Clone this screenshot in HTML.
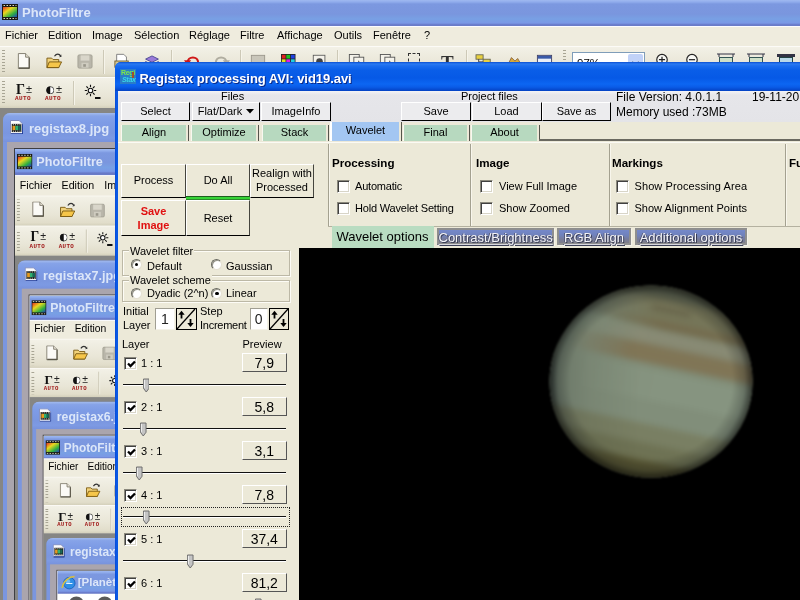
<!DOCTYPE html>
<html><head><meta charset="utf-8"><title>PhotoFiltre</title>
<style>
*{box-sizing:border-box;margin:0;padding:0}
html,body{width:800px;height:600px;overflow:hidden;background:#808080}
body{font-family:"Liberation Sans",sans-serif;font-size:11px;color:#000}
#root{position:absolute;left:0;top:0;width:800px;height:600px;overflow:hidden;will-change:transform}
.ic{position:absolute;display:block}
/* ---------- PhotoFiltre window ---------- */
.pf{position:absolute;left:0;top:0;width:800px;height:600px;overflow:hidden;background:#ece9d8}
.pftitle{position:absolute;left:0;top:0;width:800px;height:25.500px;background:linear-gradient(#9fb9f0 0,#90acec 2px,#7c98e0 4px,#7a96de 14px,#78a0e4 19px,#7a98e6 23px,#6676c6 25px,#6a7cc8 25.500px)}
.pftxt{position:absolute;top:4px;font-weight:bold;font-size:13px;line-height:17px;color:#dbe6f9;white-space:nowrap}
.menubar{position:absolute;left:0;top:25.500px;width:800px;height:20.500px;background:#efecde;border-top:1px solid #fbfbff}
.menubar span{position:absolute;top:1.500px;font-size:11px;line-height:14px;white-space:nowrap}
.tb{position:absolute;left:0;width:800px;height:31px;background:linear-gradient(#f3f1e7 0,#efede1 6px,#e9e6d7 18px,#e1ddca 27px,#d6d2bd 29.500px,#b5b19c 30.500px,#b5b19c 31px);border-top:1px solid #fcfbf7}
.grip{position:absolute;width:3px;background:repeating-linear-gradient(#a8a594 0,#a8a594 1px,transparent 1px,transparent 3px)}
.sep{position:absolute;width:2px;border-left:1px solid #cdc9b7;border-right:1px solid #f6f4ea}
.auto{position:absolute;left:0;top:15px;font:bold 6px/7px "Liberation Mono",monospace;color:#a01818;letter-spacing:.4px}
.mdi{position:absolute;left:0;top:108px;width:800px;height:640px;background:#868684}
.child{position:absolute;left:2.700px;top:4.700px;width:760px;height:640px;background:#7a96df;border-radius:7px 7px 0 0;overflow:hidden}
.ctitle{position:absolute;left:0;top:0;width:100%;height:29px;background:linear-gradient(#a3bbee 0,#86a3e8 3px,#7e9ce6 9px,#7a96df 20px,#7d9ae3 25px,#7892dc 29px)}
.ctxt{position:absolute;left:26.300px;top:7px;font-weight:bold;font-size:13px;line-height:17px;color:#dbe6f9;white-space:nowrap}
.cclient{position:absolute;left:4.100px;top:29px;width:752px;height:640px;background:#aaa5ad}
.nest{position:absolute;left:8.200px;top:7px;width:800px;height:600px;transform:scale(.97);transform-origin:0 0;outline:1px solid #3c3c40}
/* ---------- Registax window ---------- */
#rx{position:absolute;left:0;top:0;width:800px;height:600px;overflow:hidden}
.rxframe{position:absolute;left:115px;top:62px;width:700px;height:560px;background:linear-gradient(90deg,#0846d0 0,#0a58e4 1px,#0a58e4 100%);border-radius:6px 0 0 0}
.rxtitle{position:absolute;left:115px;top:62px;width:700px;height:29px;border-radius:6px 0 0 0;background:linear-gradient(#0a4fd2 0,#2a7af2 2px,#1a6cee 4px,#0a5ee8 8px,#0659e6 16px,#0c66f2 22px,#0a5ce8 25px,#0548cc 28px,#0443c4 29px)}
.rxicon{position:absolute;left:120px;top:69px;width:16px;height:14.500px;background:#2a7cc8;overflow:hidden}
.rxicon span{position:absolute;font:bold 7px/8px "Liberation Sans",sans-serif;letter-spacing:-.3px}
.rxicon i{position:absolute;left:12px;top:3px;width:2px;height:6px;background:#a05028}
.rxttxt{position:absolute;left:139.500px;top:69.500px;letter-spacing:-.05px;font-weight:bold;font-size:13px;line-height:17px;color:#fff;white-space:nowrap;text-shadow:1px 1px 0 #0a2a8a}
.rxclient{position:absolute;left:0;top:0;width:800px;height:600px;clip-path:polygon(118px 91px,800px 91px,800px 600px,118px 600px);background:#ece9d8}
.toppanel{position:absolute;left:118px;top:90.500px;width:700px;height:31px;background:linear-gradient(#f4f4f6 0,#e6e6ea 4px,#e4e4e8 100%)}
.l{position:absolute;font-size:11px;line-height:13px;white-space:nowrap}
.l.f12{font-size:12px;line-height:14px}
.l.hd{font-weight:bold;font-size:11.600px;line-height:13px}
.l.gbl{background:#ece9d8;padding:0 1px;margin-left:-1px}
.l.il{line-height:14px}
.b{position:absolute;background:#ece9d8;border-top:1px solid #fff;border-left:1px solid #fff;border-right:1.500px solid #000;border-bottom:1.500px solid #000;display:flex;align-items:center;justify-content:center;text-align:center;font-size:11px;line-height:14px}
.b.tb{background:#ececee}
.b.ab{border-right:1px solid #45453e}
.b span{display:block}
.tab{position:absolute;top:125px;height:15.500px;background:#b7d9bf;text-align:center;font-size:11px;line-height:15px;box-shadow:-1px 0 0 #f8f8f0,2px 0 0 #ece9d8,3px 0 0 #55554c}
.tab.act{top:122px;height:18.500px;background:#a3c6f2;line-height:16px;box-shadow:-2px 0 0 #fff,2px 0 0 #ece9d8,3px 0 0 #55554c}
.tabline{position:absolute;left:118px;top:141.500px;width:700px;height:1px;background:#fbfaf4}
.vdiv{position:absolute;top:144px;width:2px;height:82px;border-left:1px solid #a4a190;border-right:1px solid #f8f6ec}
.hdiv{position:absolute;left:328px;top:225.500px;width:480px;height:1px;background:#b4b1a0}
.cb{position:absolute;width:13px;height:13px;background:#fff;border:1px solid #8a887c;border-right-color:#fff;border-bottom-color:#fff;box-shadow:inset 1px 1px 0 #404040,inset -1px -1px 0 #d8d5c8}
.st0{position:absolute;background:#b9dcc1;font-size:13px;line-height:22px;text-align:center}
.st{position:absolute;top:228px;height:17px;border:2px solid #8e8e8e;background:linear-gradient(#7488ca 0,#7082bc 40%,#767b9c 70%,#7e7e88 100%);font-size:13px;line-height:16px;text-align:center;color:#f4f4f8;white-space:nowrap;text-shadow:1px 1px 0 #3a3e55,-1px 0 0 #565a78;box-shadow:1px 1px 0 #f4f2e8}
.st span{text-decoration:underline;text-decoration-thickness:1px;text-underline-offset:1.500px;text-decoration-color:#d8d8e0;position:relative;top:-.5px}
.blk{position:absolute;left:298.500px;top:247.500px;width:520px;height:360px;background:#000}
.gb{position:absolute;border:1px solid #d4d0c0;box-shadow:inset 1px 1px 0 #fdfcf6,1px 1px 0 #fdfcf6;border-color:#bcb8a6}
.rd{position:absolute;width:11px;height:11px;border-radius:50%;background:#fff;border:1px solid #6a6a60;border-right-color:#e4e0d2;border-bottom-color:#e4e0d2;box-shadow:inset 1px 1px 0 #9a988c}
.rd i{position:absolute;left:3px;top:3px;width:3.500px;height:3.500px;border-radius:50%;background:#000}
.sv{position:absolute;height:22px;background:#fff;border:1px solid #a09e92;border-right-color:#f4f2e8;border-bottom-color:#f4f2e8;color:#222;font-size:14px;line-height:20px;text-align:center}
.sb{position:absolute;width:20.500px;height:22px;background:#ece9d8;border:1px solid #000}
.sb svg{position:absolute;left:-1px;top:-1px}
.pv{position:absolute;width:45.500px;height:18.500px;background:#ece9d8;border-top:1px solid #fff;border-left:1px solid #fff;border-right:1.500px solid #555;border-bottom:1.500px solid #555;font-size:14px;line-height:19px;text-align:center}
.sl{position:absolute;width:163px;height:3.500px;background:#111;border-bottom:1px solid #fff;height:2.600px}
.th{position:absolute;width:7px;height:14px}
.focus{position:absolute;border:1px dotted #222}
/* Jupiter */
.jup{position:absolute;left:550px;top:285px;width:201px;height:194px;border-radius:50%;overflow:hidden;background:#b9bfae;filter:blur(1.200px)}
.jup div{position:absolute;left:-20px;width:250px}
.jshade{left:0!important;top:0;width:201px!important;height:194px;border-radius:50%;background:radial-gradient(ellipse at 45% 48%,rgba(0,0,0,0) 55%,rgba(10,14,8,.35) 85%,rgba(0,0,0,.8) 100%)}

.shift,.tshift{position:absolute;left:0;top:0;width:800px;height:600px}
.pf.n>.tshift{top:1px}
.pf.n>.pftitle{height:28px}

</style></head>
<body>
<div id="root">
<div class="pf"><div class="pftitle"></div><div class="tshift"><svg class="ic" style="left:2px;top:4px" width="16" height="16" viewBox="0 0 16 16"><defs><linearGradient id="rg" x1="0" y1="0" x2="1" y2="1"><stop offset="0" stop-color="#e83020"/><stop offset=".35" stop-color="#e8d820"/><stop offset=".7" stop-color="#30b040"/><stop offset="1" stop-color="#2040c0"/></linearGradient></defs><rect width="16" height="16" fill="#1a1a14"/><rect x="1" y="3" width="14" height="10" fill="url(#rg)"/><path d="M1.500 1.500h13M1.500 14.500h13" stroke="#d8d8c0" stroke-width="1" stroke-dasharray="1.500 1.500"/></svg><div class="pftxt" style="left:22px">PhotoFiltre</div></div><div class="shift" style="top:0px"><div class="menubar"><span style="left:5px">Fichier</span><span style="left:48px">Edition</span><span style="left:92px">Image</span><span style="left:134px">Sélection</span><span style="left:189px">Réglage</span><span style="left:240px">Filtre</span><span style="left:277px">Affichage</span><span style="left:334px">Outils</span><span style="left:373px">Fenêtre</span><span style="left:424px">?</span></div><div class="tb" style="top:46px"></div><div class="tb" style="top:77px"></div><div class="grip" style="left:2px;top:50px;height:24px"></div><svg class="ic" style="left:17px;top:52.500px" width="14.500" height="16.500" viewBox="0 0 16 18"><path d="M1.5 .5h8l4 4v12.5h-12z" fill="#fbfaf6" stroke="#7d786a"/><path d="M9.5 .5v4h4" fill="#e6e2d4" stroke="#7d786a"/><path d="M2 16.5h11.500" stroke="#5a5648" stroke-width="1.6"/><path d="M13.5 5v12" stroke="#5a5648" stroke-width="1.3"/></svg><svg class="ic" style="left:45.500px;top:52px" width="17" height="17" viewBox="0 0 18 18"><path d="M1 6.500h5l1.500 1.500h6v8.500h-12.500z" fill="#f1d27a" stroke="#7a5a12"/><path d="M3.500 10.500h13l-3 6h-12.500z" fill="#f6c64a" stroke="#7a5a12"/><path d="M9 4.500c2-3 5-3 6.500 0" fill="none" stroke="#333" stroke-width="1.300"/><path d="M14 5.500l2.500-.5-.500-2.500z" fill="#333"/></svg><svg class="ic" style="left:77px;top:54px" width="16" height="15" viewBox="0 0 18 17"><rect x="1" y="1" width="16" height="15" rx="1.500" fill="#b9b6aa" stroke="#a29f92"/><rect x="4" y="1.500" width="10" height="6" fill="#d9d6ca"/><rect x="5" y="10" width="8" height="5.500" fill="#cfccc0"/><rect x="7" y="11.500" width="3" height="3" fill="#9a978b"/></svg><div class="sep" style="left:103px;top:50px;height:24px"></div><svg class="ic" style="left:114px;top:53px" width="16" height="16" viewBox="0 0 18 18"><path d="M3 1.500h8l3 3v9h-11z" fill="#fff" stroke="#777"/><rect x="1" y="9" width="15" height="7" fill="#d8c890" stroke="#6a5a2a"/></svg><svg class="ic" style="left:144px;top:53.500px" width="16" height="15" viewBox="0 0 20 18"><path d="M2 6l8-4 8 4-8 4z" fill="#9a7ad8" stroke="#3a3a8a"/><path d="M2 9l8 4 8-4v4l-8 4-8-4z" fill="#c8c8e8" stroke="#3a3a8a"/></svg><div class="sep" style="left:171px;top:50px;height:24px"></div><svg class="ic" style="left:183.500px;top:54px" width="16" height="16" viewBox="0 0 18 18"><path d="M4 10c0-8 12-8 12 0" fill="none" stroke="#d01818" stroke-width="2.400"/><path d="M0 7l8 0-4 6z" fill="#d01818"/></svg><svg class="ic" style="left:214px;top:54px" width="16" height="16" viewBox="0 0 18 18"><path d="M2 10c0-8 12-8 12 0" fill="none" stroke="#b0ada0" stroke-width="2.400"/><path d="M18 7l-8 0 4 6z" fill="#b0ada0"/></svg><div class="sep" style="left:239.500px;top:50px;height:24px"></div><svg class="ic" style="left:249.500px;top:53.500px" width="16" height="16" viewBox="0 0 18 18"><rect x="1.500" y="1.500" width="15" height="15" fill="#c9c6ba" stroke="#9a978b"/></svg><svg class="ic" style="left:281px;top:54px" width="14.500" height="14.500" viewBox="0 0 18 18"><rect x="0" y="0" width="18" height="18" fill="#222"/><rect x="1" y="1" width="4.700" height="4.700" fill="#e02020"/><rect x="6.600" y="1" width="4.700" height="4.700" fill="#20c020"/><rect x="12.300" y="1" width="4.700" height="4.700" fill="#2040e0"/><rect x="1" y="6.600" width="4.700" height="4.700" fill="#e0e020"/><rect x="6.600" y="6.600" width="4.700" height="4.700" fill="#e020e0"/><rect x="12.300" y="6.600" width="4.700" height="4.700" fill="#20d0e0"/><rect x="1" y="12.300" width="4.700" height="4.700" fill="#ff8020"/><rect x="6.600" y="12.300" width="4.700" height="4.700" fill="#8040c0"/><rect x="12.300" y="12.300" width="4.700" height="4.700" fill="#40a080"/></svg><svg class="ic" style="left:312px;top:53.500px" width="15" height="15" viewBox="0 0 18 18"><rect x="1.500" y="1.500" width="14" height="15" fill="#f4f2ea" stroke="#555"/><circle cx="9" cy="9" r="4" fill="#444"/></svg><div class="sep" style="left:337px;top:50px;height:24px"></div><svg class="ic"  style="left:348px;top:52.500px" width="18" height="16.500" viewBox="0 0 20 18"><rect x="1.500" y="1.500" width="11" height="13" fill="#f4f2ea" stroke="#555"/><rect x="6.500" y="4.500" width="11" height="13" fill="#f4f2ea" stroke="#555"/><path d="M9 16l3-8 3 8z" fill="#333"/></svg><svg class="ic"  style="left:379px;top:52.500px" width="18" height="16.500" viewBox="0 0 20 18"><rect x="1.500" y="1.500" width="11" height="13" fill="#f4f2ea" stroke="#555"/><rect x="6.500" y="4.500" width="11" height="13" fill="#f4f2ea" stroke="#555"/><path d="M9 16l3-8 3 8z" fill="#333"/></svg><div style="position:absolute;left:408px;top:53px;width:12px;height:14px;border:1px dashed #333"></div><div style="position:absolute;left:441px;top:52.500px;width:16px;font:bold 19px/20px 'Liberation Serif',serif;color:#333">T</div><div class="sep" style="left:466px;top:50px;height:24px"></div><svg class="ic" style="left:475px;top:53px" width="18" height="16" viewBox="0 0 20 18"><rect x="1" y="2" width="8" height="5" fill="#e8d040" stroke="#665"/><rect x="9" y="7" width="8" height="5" fill="#e8d040" stroke="#665"/><path d="M4 7v3h5" fill="none" stroke="#333"/></svg><svg class="ic" style="left:506px;top:53.500px" width="18" height="16" viewBox="0 0 20 18"><path d="M2 12l4-8 4 4 3-3 4 7z" fill="#d8a838" stroke="#864"/></svg><svg class="ic" style="left:535.500px;top:53px" width="17" height="17" viewBox="0 0 18 18"><rect x="1.500" y="2.500" width="15" height="12" fill="#e8eef8" stroke="#446"/><rect x="2" y="3" width="14" height="3" fill="#3a5aa8"/></svg><div class="grip" style="left:563px;top:50px;height:24px"></div><div style="position:absolute;left:572px;top:51.500px;width:72.500px;height:21px;border:1px solid #7f9db9;background:#fff"><span style="position:absolute;left:4px;top:4.500px;font-size:11.500px">97%</span><div style="position:absolute;right:1px;top:1px;width:15px;height:19px;background:#c1d2f8;border-radius:2px"><svg width="15" height="19" viewBox="0 0 15 19"><path d="M4 8l3.500 3.500L11 8" fill="none" stroke="#4d6185" stroke-width="2"/></svg></div></div><svg class="ic" style="left:655px;top:53px" width="14" height="16" viewBox="0 0 16 18"><circle cx="8" cy="7.500" r="6" fill="#f8f8f4" stroke="#222" stroke-width="1.300"/><path d="M4.500 7.500h7M8 4v7" stroke="#222" stroke-width="1.400"/></svg><svg class="ic" style="left:684.500px;top:53px" width="14" height="16" viewBox="0 0 16 18"><circle cx="8" cy="7.500" r="6" fill="#f8f8f4" stroke="#222" stroke-width="1.300"/><path d="M4.500 7.500h7" stroke="#222" stroke-width="1.400"/></svg><svg class="ic" style="left:716px;top:53px" width="20" height="16" viewBox="0 0 20 16"><path d="M1 1h18" stroke="#334"/><path d="M3 1v3M17 1v3" stroke="#334"/><rect x="3.500" y="4.500" width="13" height="11" fill="#cfe0c8" stroke="#355"/><path d="M4 15l3-6 3 4 2-3 4 5z" fill="#3a8a4a"/></svg><svg class="ic" style="left:746px;top:53px" width="20" height="16" viewBox="0 0 20 16"><path d="M1 1h18" stroke="#334"/><path d="M3 1v3M17 1v3" stroke="#334"/><rect x="3.500" y="4.500" width="13" height="11" fill="#cfe0c8" stroke="#355"/><path d="M4 15l3-6 3 4 2-3 4 5z" fill="#3a8a4a"/></svg><svg class="ic" style="left:776px;top:53px" width="20" height="16" viewBox="0 0 20 16"><rect x="1" y="1" width="18" height="3" fill="#334"/><rect x="3.500" y="4.500" width="13" height="11" fill="#b8d8e8" stroke="#244"/></svg><div class="grip" style="left:2px;top:81px;height:24px"></div><div style="position:absolute;left:15px;top:80px;width:20px;height:24px"><span style="position:absolute;left:1px;top:1.500px;font:bold 14px/15px 'Liberation Serif',serif;color:#111">Γ</span><span style="position:absolute;left:11px;top:2.500px;font:11px/12px 'Liberation Sans',sans-serif;color:#222">±</span><span class="auto">AUTO</span></div><div style="position:absolute;left:45px;top:80px;width:20px;height:24px"><svg style="position:absolute;left:.5px;top:5.500px" width="8.500" height="8.500" viewBox="0 0 10 10"><circle cx="5" cy="5" r="4.300" fill="#fff" stroke="#111" stroke-width=".8"/><path d="M5 .5a4.500 4.500 0 0 0 0 9z" fill="#111"/></svg><span style="position:absolute;left:11px;top:2.500px;font:11px/12px 'Liberation Sans',sans-serif;color:#222">±</span><span class="auto">AUTO</span></div><div class="sep" style="left:73px;top:81px;height:24px"></div><svg class="ic" style="left:83.500px;top:83.500px" width="18" height="16" viewBox="0 0 18 16"><circle cx="6.500" cy="6.500" r="2.300" fill="#fff" stroke="#111" stroke-width="1.100"/><path d="M6.500 .8v2.200M6.500 10v2.200M.8 6.500h2.200M10 6.500h2.200M2.400 2.400l1.600 1.600M9 9l1.600 1.600M10.600 2.400L9 4M4 9l-1.600 1.600" stroke="#111" stroke-width="1.100"/><path d="M11 14h5.500" stroke="#111" stroke-width="2"/></svg><div class="mdi"><div class="child"><div class="ctitle"></div><svg class="ic" style="left:7px;top:7px" width="13.500" height="14.500" viewBox="0 0 14 15"><path d="M.5 .5h9l3.500 3.500v10.500h-12.500z" fill="#fdfdfd" stroke="#7c86b8"/><path d="M13.200 4.500v10M1 14.300h12.500" stroke="#1c3a9a" stroke-width="1.200"/><rect x="1.800" y="4" width="10" height="8.500" fill="#1c1c18"/><rect x="2.600" y="6" width="3" height="4.500" fill="#e89a20"/><rect x="5.600" y="6" width="3" height="4.500" fill="#30b070"/><rect x="8.600" y="6" width="2.400" height="4.500" fill="#186858"/><path d="M3 4.900h8M3 11.600h8" stroke="#f4f4e8" stroke-width="1" stroke-dasharray="1 1.300"/></svg><div class="ctxt">registax8.jpg</div><div class="cclient"><div class="nest"><div class="pf n"><div class="pftitle"></div><div class="tshift"><svg class="ic" style="left:2px;top:4px" width="16" height="16" viewBox="0 0 16 16"><defs><linearGradient id="rg" x1="0" y1="0" x2="1" y2="1"><stop offset="0" stop-color="#e83020"/><stop offset=".35" stop-color="#e8d820"/><stop offset=".7" stop-color="#30b040"/><stop offset="1" stop-color="#2040c0"/></linearGradient></defs><rect width="16" height="16" fill="#1a1a14"/><rect x="1" y="3" width="14" height="10" fill="url(#rg)"/><path d="M1.500 1.500h13M1.500 14.500h13" stroke="#d8d8c0" stroke-width="1" stroke-dasharray="1.500 1.500"/></svg><div class="pftxt" style="left:22px">PhotoFiltre</div></div><div class="shift" style="top:1.9px"><div class="menubar"><span style="left:5px">Fichier</span><span style="left:48px">Edition</span><span style="left:92px">Image</span><span style="left:134px">Sélection</span><span style="left:189px">Réglage</span><span style="left:240px">Filtre</span><span style="left:277px">Affichage</span><span style="left:334px">Outils</span><span style="left:373px">Fenêtre</span><span style="left:424px">?</span></div><div class="tb" style="top:46px"></div><div class="tb" style="top:77px"></div><div class="grip" style="left:2px;top:50px;height:24px"></div><svg class="ic" style="left:17px;top:52.500px" width="14.500" height="16.500" viewBox="0 0 16 18"><path d="M1.5 .5h8l4 4v12.5h-12z" fill="#fbfaf6" stroke="#7d786a"/><path d="M9.5 .5v4h4" fill="#e6e2d4" stroke="#7d786a"/><path d="M2 16.5h11.500" stroke="#5a5648" stroke-width="1.6"/><path d="M13.5 5v12" stroke="#5a5648" stroke-width="1.3"/></svg><svg class="ic" style="left:45.500px;top:52px" width="17" height="17" viewBox="0 0 18 18"><path d="M1 6.500h5l1.500 1.500h6v8.500h-12.500z" fill="#f1d27a" stroke="#7a5a12"/><path d="M3.500 10.500h13l-3 6h-12.500z" fill="#f6c64a" stroke="#7a5a12"/><path d="M9 4.500c2-3 5-3 6.500 0" fill="none" stroke="#333" stroke-width="1.300"/><path d="M14 5.500l2.500-.5-.500-2.500z" fill="#333"/></svg><svg class="ic" style="left:77px;top:54px" width="16" height="15" viewBox="0 0 18 17"><rect x="1" y="1" width="16" height="15" rx="1.500" fill="#b9b6aa" stroke="#a29f92"/><rect x="4" y="1.500" width="10" height="6" fill="#d9d6ca"/><rect x="5" y="10" width="8" height="5.500" fill="#cfccc0"/><rect x="7" y="11.500" width="3" height="3" fill="#9a978b"/></svg><div class="sep" style="left:103px;top:50px;height:24px"></div><svg class="ic" style="left:114px;top:53px" width="16" height="16" viewBox="0 0 18 18"><path d="M3 1.500h8l3 3v9h-11z" fill="#fff" stroke="#777"/><rect x="1" y="9" width="15" height="7" fill="#d8c890" stroke="#6a5a2a"/></svg><svg class="ic" style="left:144px;top:53.500px" width="16" height="15" viewBox="0 0 20 18"><path d="M2 6l8-4 8 4-8 4z" fill="#9a7ad8" stroke="#3a3a8a"/><path d="M2 9l8 4 8-4v4l-8 4-8-4z" fill="#c8c8e8" stroke="#3a3a8a"/></svg><div class="sep" style="left:171px;top:50px;height:24px"></div><svg class="ic" style="left:183.500px;top:54px" width="16" height="16" viewBox="0 0 18 18"><path d="M4 10c0-8 12-8 12 0" fill="none" stroke="#d01818" stroke-width="2.400"/><path d="M0 7l8 0-4 6z" fill="#d01818"/></svg><svg class="ic" style="left:214px;top:54px" width="16" height="16" viewBox="0 0 18 18"><path d="M2 10c0-8 12-8 12 0" fill="none" stroke="#b0ada0" stroke-width="2.400"/><path d="M18 7l-8 0 4 6z" fill="#b0ada0"/></svg><div class="sep" style="left:239.500px;top:50px;height:24px"></div><svg class="ic" style="left:249.500px;top:53.500px" width="16" height="16" viewBox="0 0 18 18"><rect x="1.500" y="1.500" width="15" height="15" fill="#c9c6ba" stroke="#9a978b"/></svg><svg class="ic" style="left:281px;top:54px" width="14.500" height="14.500" viewBox="0 0 18 18"><rect x="0" y="0" width="18" height="18" fill="#222"/><rect x="1" y="1" width="4.700" height="4.700" fill="#e02020"/><rect x="6.600" y="1" width="4.700" height="4.700" fill="#20c020"/><rect x="12.300" y="1" width="4.700" height="4.700" fill="#2040e0"/><rect x="1" y="6.600" width="4.700" height="4.700" fill="#e0e020"/><rect x="6.600" y="6.600" width="4.700" height="4.700" fill="#e020e0"/><rect x="12.300" y="6.600" width="4.700" height="4.700" fill="#20d0e0"/><rect x="1" y="12.300" width="4.700" height="4.700" fill="#ff8020"/><rect x="6.600" y="12.300" width="4.700" height="4.700" fill="#8040c0"/><rect x="12.300" y="12.300" width="4.700" height="4.700" fill="#40a080"/></svg><svg class="ic" style="left:312px;top:53.500px" width="15" height="15" viewBox="0 0 18 18"><rect x="1.500" y="1.500" width="14" height="15" fill="#f4f2ea" stroke="#555"/><circle cx="9" cy="9" r="4" fill="#444"/></svg><div class="sep" style="left:337px;top:50px;height:24px"></div><svg class="ic"  style="left:348px;top:52.500px" width="18" height="16.500" viewBox="0 0 20 18"><rect x="1.500" y="1.500" width="11" height="13" fill="#f4f2ea" stroke="#555"/><rect x="6.500" y="4.500" width="11" height="13" fill="#f4f2ea" stroke="#555"/><path d="M9 16l3-8 3 8z" fill="#333"/></svg><svg class="ic"  style="left:379px;top:52.500px" width="18" height="16.500" viewBox="0 0 20 18"><rect x="1.500" y="1.500" width="11" height="13" fill="#f4f2ea" stroke="#555"/><rect x="6.500" y="4.500" width="11" height="13" fill="#f4f2ea" stroke="#555"/><path d="M9 16l3-8 3 8z" fill="#333"/></svg><div style="position:absolute;left:408px;top:53px;width:12px;height:14px;border:1px dashed #333"></div><div style="position:absolute;left:441px;top:52.500px;width:16px;font:bold 19px/20px 'Liberation Serif',serif;color:#333">T</div><div class="sep" style="left:466px;top:50px;height:24px"></div><svg class="ic" style="left:475px;top:53px" width="18" height="16" viewBox="0 0 20 18"><rect x="1" y="2" width="8" height="5" fill="#e8d040" stroke="#665"/><rect x="9" y="7" width="8" height="5" fill="#e8d040" stroke="#665"/><path d="M4 7v3h5" fill="none" stroke="#333"/></svg><svg class="ic" style="left:506px;top:53.500px" width="18" height="16" viewBox="0 0 20 18"><path d="M2 12l4-8 4 4 3-3 4 7z" fill="#d8a838" stroke="#864"/></svg><svg class="ic" style="left:535.500px;top:53px" width="17" height="17" viewBox="0 0 18 18"><rect x="1.500" y="2.500" width="15" height="12" fill="#e8eef8" stroke="#446"/><rect x="2" y="3" width="14" height="3" fill="#3a5aa8"/></svg><div class="grip" style="left:563px;top:50px;height:24px"></div><div style="position:absolute;left:572px;top:51.500px;width:72.500px;height:21px;border:1px solid #7f9db9;background:#fff"><span style="position:absolute;left:4px;top:4.500px;font-size:11.500px">97%</span><div style="position:absolute;right:1px;top:1px;width:15px;height:19px;background:#c1d2f8;border-radius:2px"><svg width="15" height="19" viewBox="0 0 15 19"><path d="M4 8l3.500 3.500L11 8" fill="none" stroke="#4d6185" stroke-width="2"/></svg></div></div><svg class="ic" style="left:655px;top:53px" width="14" height="16" viewBox="0 0 16 18"><circle cx="8" cy="7.500" r="6" fill="#f8f8f4" stroke="#222" stroke-width="1.300"/><path d="M4.500 7.500h7M8 4v7" stroke="#222" stroke-width="1.400"/></svg><svg class="ic" style="left:684.500px;top:53px" width="14" height="16" viewBox="0 0 16 18"><circle cx="8" cy="7.500" r="6" fill="#f8f8f4" stroke="#222" stroke-width="1.300"/><path d="M4.500 7.500h7" stroke="#222" stroke-width="1.400"/></svg><svg class="ic" style="left:716px;top:53px" width="20" height="16" viewBox="0 0 20 16"><path d="M1 1h18" stroke="#334"/><path d="M3 1v3M17 1v3" stroke="#334"/><rect x="3.500" y="4.500" width="13" height="11" fill="#cfe0c8" stroke="#355"/><path d="M4 15l3-6 3 4 2-3 4 5z" fill="#3a8a4a"/></svg><svg class="ic" style="left:746px;top:53px" width="20" height="16" viewBox="0 0 20 16"><path d="M1 1h18" stroke="#334"/><path d="M3 1v3M17 1v3" stroke="#334"/><rect x="3.500" y="4.500" width="13" height="11" fill="#cfe0c8" stroke="#355"/><path d="M4 15l3-6 3 4 2-3 4 5z" fill="#3a8a4a"/></svg><svg class="ic" style="left:776px;top:53px" width="20" height="16" viewBox="0 0 20 16"><rect x="1" y="1" width="18" height="3" fill="#334"/><rect x="3.500" y="4.500" width="13" height="11" fill="#b8d8e8" stroke="#244"/></svg><div class="grip" style="left:2px;top:81px;height:24px"></div><div style="position:absolute;left:15px;top:80px;width:20px;height:24px"><span style="position:absolute;left:1px;top:1.500px;font:bold 14px/15px 'Liberation Serif',serif;color:#111">Γ</span><span style="position:absolute;left:11px;top:2.500px;font:11px/12px 'Liberation Sans',sans-serif;color:#222">±</span><span class="auto">AUTO</span></div><div style="position:absolute;left:45px;top:80px;width:20px;height:24px"><svg style="position:absolute;left:.5px;top:5.500px" width="8.500" height="8.500" viewBox="0 0 10 10"><circle cx="5" cy="5" r="4.300" fill="#fff" stroke="#111" stroke-width=".8"/><path d="M5 .5a4.500 4.500 0 0 0 0 9z" fill="#111"/></svg><span style="position:absolute;left:11px;top:2.500px;font:11px/12px 'Liberation Sans',sans-serif;color:#222">±</span><span class="auto">AUTO</span></div><div class="sep" style="left:73px;top:81px;height:24px"></div><svg class="ic" style="left:83.500px;top:83.500px" width="18" height="16" viewBox="0 0 18 16"><circle cx="6.500" cy="6.500" r="2.300" fill="#fff" stroke="#111" stroke-width="1.100"/><path d="M6.500 .8v2.200M6.500 10v2.200M.8 6.500h2.200M10 6.500h2.200M2.400 2.400l1.600 1.600M9 9l1.600 1.600M10.600 2.400L9 4M4 9l-1.600 1.600" stroke="#111" stroke-width="1.100"/><path d="M11 14h5.500" stroke="#111" stroke-width="2"/></svg><div class="mdi"><div class="child"><div class="ctitle"></div><svg class="ic" style="left:7px;top:7px" width="13.500" height="14.500" viewBox="0 0 14 15"><path d="M.5 .5h9l3.500 3.500v10.500h-12.500z" fill="#fdfdfd" stroke="#7c86b8"/><path d="M13.200 4.500v10M1 14.300h12.500" stroke="#1c3a9a" stroke-width="1.200"/><rect x="1.800" y="4" width="10" height="8.500" fill="#1c1c18"/><rect x="2.600" y="6" width="3" height="4.500" fill="#e89a20"/><rect x="5.600" y="6" width="3" height="4.500" fill="#30b070"/><rect x="8.600" y="6" width="2.400" height="4.500" fill="#186858"/><path d="M3 4.900h8M3 11.600h8" stroke="#f4f4e8" stroke-width="1" stroke-dasharray="1 1.300"/></svg><div class="ctxt">registax7.jpg</div><div class="cclient"><div class="nest"><div class="pf n"><div class="pftitle"></div><div class="tshift"><svg class="ic" style="left:2px;top:4px" width="16" height="16" viewBox="0 0 16 16"><defs><linearGradient id="rg" x1="0" y1="0" x2="1" y2="1"><stop offset="0" stop-color="#e83020"/><stop offset=".35" stop-color="#e8d820"/><stop offset=".7" stop-color="#30b040"/><stop offset="1" stop-color="#2040c0"/></linearGradient></defs><rect width="16" height="16" fill="#1a1a14"/><rect x="1" y="3" width="14" height="10" fill="url(#rg)"/><path d="M1.500 1.500h13M1.500 14.500h13" stroke="#d8d8c0" stroke-width="1" stroke-dasharray="1.500 1.500"/></svg><div class="pftxt" style="left:22px">PhotoFiltre</div></div><div class="shift" style="top:0px"><div class="menubar"><span style="left:5px">Fichier</span><span style="left:48px">Edition</span><span style="left:92px">Image</span><span style="left:134px">Sélection</span><span style="left:189px">Réglage</span><span style="left:240px">Filtre</span><span style="left:277px">Affichage</span><span style="left:334px">Outils</span><span style="left:373px">Fenêtre</span><span style="left:424px">?</span></div><div class="tb" style="top:46px"></div><div class="tb" style="top:77px"></div><div class="grip" style="left:2px;top:50px;height:24px"></div><svg class="ic" style="left:17px;top:52.500px" width="14.500" height="16.500" viewBox="0 0 16 18"><path d="M1.5 .5h8l4 4v12.5h-12z" fill="#fbfaf6" stroke="#7d786a"/><path d="M9.5 .5v4h4" fill="#e6e2d4" stroke="#7d786a"/><path d="M2 16.5h11.500" stroke="#5a5648" stroke-width="1.6"/><path d="M13.5 5v12" stroke="#5a5648" stroke-width="1.3"/></svg><svg class="ic" style="left:45.500px;top:52px" width="17" height="17" viewBox="0 0 18 18"><path d="M1 6.500h5l1.500 1.500h6v8.500h-12.500z" fill="#f1d27a" stroke="#7a5a12"/><path d="M3.500 10.500h13l-3 6h-12.500z" fill="#f6c64a" stroke="#7a5a12"/><path d="M9 4.500c2-3 5-3 6.500 0" fill="none" stroke="#333" stroke-width="1.300"/><path d="M14 5.500l2.500-.5-.500-2.500z" fill="#333"/></svg><svg class="ic" style="left:77px;top:54px" width="16" height="15" viewBox="0 0 18 17"><rect x="1" y="1" width="16" height="15" rx="1.500" fill="#b9b6aa" stroke="#a29f92"/><rect x="4" y="1.500" width="10" height="6" fill="#d9d6ca"/><rect x="5" y="10" width="8" height="5.500" fill="#cfccc0"/><rect x="7" y="11.500" width="3" height="3" fill="#9a978b"/></svg><div class="sep" style="left:103px;top:50px;height:24px"></div><svg class="ic" style="left:114px;top:53px" width="16" height="16" viewBox="0 0 18 18"><path d="M3 1.500h8l3 3v9h-11z" fill="#fff" stroke="#777"/><rect x="1" y="9" width="15" height="7" fill="#d8c890" stroke="#6a5a2a"/></svg><svg class="ic" style="left:144px;top:53.500px" width="16" height="15" viewBox="0 0 20 18"><path d="M2 6l8-4 8 4-8 4z" fill="#9a7ad8" stroke="#3a3a8a"/><path d="M2 9l8 4 8-4v4l-8 4-8-4z" fill="#c8c8e8" stroke="#3a3a8a"/></svg><div class="sep" style="left:171px;top:50px;height:24px"></div><svg class="ic" style="left:183.500px;top:54px" width="16" height="16" viewBox="0 0 18 18"><path d="M4 10c0-8 12-8 12 0" fill="none" stroke="#d01818" stroke-width="2.400"/><path d="M0 7l8 0-4 6z" fill="#d01818"/></svg><svg class="ic" style="left:214px;top:54px" width="16" height="16" viewBox="0 0 18 18"><path d="M2 10c0-8 12-8 12 0" fill="none" stroke="#b0ada0" stroke-width="2.400"/><path d="M18 7l-8 0 4 6z" fill="#b0ada0"/></svg><div class="sep" style="left:239.500px;top:50px;height:24px"></div><svg class="ic" style="left:249.500px;top:53.500px" width="16" height="16" viewBox="0 0 18 18"><rect x="1.500" y="1.500" width="15" height="15" fill="#c9c6ba" stroke="#9a978b"/></svg><svg class="ic" style="left:281px;top:54px" width="14.500" height="14.500" viewBox="0 0 18 18"><rect x="0" y="0" width="18" height="18" fill="#222"/><rect x="1" y="1" width="4.700" height="4.700" fill="#e02020"/><rect x="6.600" y="1" width="4.700" height="4.700" fill="#20c020"/><rect x="12.300" y="1" width="4.700" height="4.700" fill="#2040e0"/><rect x="1" y="6.600" width="4.700" height="4.700" fill="#e0e020"/><rect x="6.600" y="6.600" width="4.700" height="4.700" fill="#e020e0"/><rect x="12.300" y="6.600" width="4.700" height="4.700" fill="#20d0e0"/><rect x="1" y="12.300" width="4.700" height="4.700" fill="#ff8020"/><rect x="6.600" y="12.300" width="4.700" height="4.700" fill="#8040c0"/><rect x="12.300" y="12.300" width="4.700" height="4.700" fill="#40a080"/></svg><svg class="ic" style="left:312px;top:53.500px" width="15" height="15" viewBox="0 0 18 18"><rect x="1.500" y="1.500" width="14" height="15" fill="#f4f2ea" stroke="#555"/><circle cx="9" cy="9" r="4" fill="#444"/></svg><div class="sep" style="left:337px;top:50px;height:24px"></div><svg class="ic"  style="left:348px;top:52.500px" width="18" height="16.500" viewBox="0 0 20 18"><rect x="1.500" y="1.500" width="11" height="13" fill="#f4f2ea" stroke="#555"/><rect x="6.500" y="4.500" width="11" height="13" fill="#f4f2ea" stroke="#555"/><path d="M9 16l3-8 3 8z" fill="#333"/></svg><svg class="ic"  style="left:379px;top:52.500px" width="18" height="16.500" viewBox="0 0 20 18"><rect x="1.500" y="1.500" width="11" height="13" fill="#f4f2ea" stroke="#555"/><rect x="6.500" y="4.500" width="11" height="13" fill="#f4f2ea" stroke="#555"/><path d="M9 16l3-8 3 8z" fill="#333"/></svg><div style="position:absolute;left:408px;top:53px;width:12px;height:14px;border:1px dashed #333"></div><div style="position:absolute;left:441px;top:52.500px;width:16px;font:bold 19px/20px 'Liberation Serif',serif;color:#333">T</div><div class="sep" style="left:466px;top:50px;height:24px"></div><svg class="ic" style="left:475px;top:53px" width="18" height="16" viewBox="0 0 20 18"><rect x="1" y="2" width="8" height="5" fill="#e8d040" stroke="#665"/><rect x="9" y="7" width="8" height="5" fill="#e8d040" stroke="#665"/><path d="M4 7v3h5" fill="none" stroke="#333"/></svg><svg class="ic" style="left:506px;top:53.500px" width="18" height="16" viewBox="0 0 20 18"><path d="M2 12l4-8 4 4 3-3 4 7z" fill="#d8a838" stroke="#864"/></svg><svg class="ic" style="left:535.500px;top:53px" width="17" height="17" viewBox="0 0 18 18"><rect x="1.500" y="2.500" width="15" height="12" fill="#e8eef8" stroke="#446"/><rect x="2" y="3" width="14" height="3" fill="#3a5aa8"/></svg><div class="grip" style="left:563px;top:50px;height:24px"></div><div style="position:absolute;left:572px;top:51.500px;width:72.500px;height:21px;border:1px solid #7f9db9;background:#fff"><span style="position:absolute;left:4px;top:4.500px;font-size:11.500px">97%</span><div style="position:absolute;right:1px;top:1px;width:15px;height:19px;background:#c1d2f8;border-radius:2px"><svg width="15" height="19" viewBox="0 0 15 19"><path d="M4 8l3.500 3.500L11 8" fill="none" stroke="#4d6185" stroke-width="2"/></svg></div></div><svg class="ic" style="left:655px;top:53px" width="14" height="16" viewBox="0 0 16 18"><circle cx="8" cy="7.500" r="6" fill="#f8f8f4" stroke="#222" stroke-width="1.300"/><path d="M4.500 7.500h7M8 4v7" stroke="#222" stroke-width="1.400"/></svg><svg class="ic" style="left:684.500px;top:53px" width="14" height="16" viewBox="0 0 16 18"><circle cx="8" cy="7.500" r="6" fill="#f8f8f4" stroke="#222" stroke-width="1.300"/><path d="M4.500 7.500h7" stroke="#222" stroke-width="1.400"/></svg><svg class="ic" style="left:716px;top:53px" width="20" height="16" viewBox="0 0 20 16"><path d="M1 1h18" stroke="#334"/><path d="M3 1v3M17 1v3" stroke="#334"/><rect x="3.500" y="4.500" width="13" height="11" fill="#cfe0c8" stroke="#355"/><path d="M4 15l3-6 3 4 2-3 4 5z" fill="#3a8a4a"/></svg><svg class="ic" style="left:746px;top:53px" width="20" height="16" viewBox="0 0 20 16"><path d="M1 1h18" stroke="#334"/><path d="M3 1v3M17 1v3" stroke="#334"/><rect x="3.500" y="4.500" width="13" height="11" fill="#cfe0c8" stroke="#355"/><path d="M4 15l3-6 3 4 2-3 4 5z" fill="#3a8a4a"/></svg><svg class="ic" style="left:776px;top:53px" width="20" height="16" viewBox="0 0 20 16"><rect x="1" y="1" width="18" height="3" fill="#334"/><rect x="3.500" y="4.500" width="13" height="11" fill="#b8d8e8" stroke="#244"/></svg><div class="grip" style="left:2px;top:81px;height:24px"></div><div style="position:absolute;left:15px;top:80px;width:20px;height:24px"><span style="position:absolute;left:1px;top:1.500px;font:bold 14px/15px 'Liberation Serif',serif;color:#111">Γ</span><span style="position:absolute;left:11px;top:2.500px;font:11px/12px 'Liberation Sans',sans-serif;color:#222">±</span><span class="auto">AUTO</span></div><div style="position:absolute;left:45px;top:80px;width:20px;height:24px"><svg style="position:absolute;left:.5px;top:5.500px" width="8.500" height="8.500" viewBox="0 0 10 10"><circle cx="5" cy="5" r="4.300" fill="#fff" stroke="#111" stroke-width=".8"/><path d="M5 .5a4.500 4.500 0 0 0 0 9z" fill="#111"/></svg><span style="position:absolute;left:11px;top:2.500px;font:11px/12px 'Liberation Sans',sans-serif;color:#222">±</span><span class="auto">AUTO</span></div><div class="sep" style="left:73px;top:81px;height:24px"></div><svg class="ic" style="left:83.500px;top:83.500px" width="18" height="16" viewBox="0 0 18 16"><circle cx="6.500" cy="6.500" r="2.300" fill="#fff" stroke="#111" stroke-width="1.100"/><path d="M6.500 .8v2.200M6.500 10v2.200M.8 6.500h2.200M10 6.500h2.200M2.400 2.400l1.600 1.600M9 9l1.600 1.600M10.600 2.400L9 4M4 9l-1.600 1.600" stroke="#111" stroke-width="1.100"/><path d="M11 14h5.500" stroke="#111" stroke-width="2"/></svg><div class="mdi"><div class="child"><div class="ctitle"></div><svg class="ic" style="left:7px;top:7px" width="13.500" height="14.500" viewBox="0 0 14 15"><path d="M.5 .5h9l3.500 3.500v10.500h-12.500z" fill="#fdfdfd" stroke="#7c86b8"/><path d="M13.200 4.500v10M1 14.300h12.500" stroke="#1c3a9a" stroke-width="1.200"/><rect x="1.800" y="4" width="10" height="8.500" fill="#1c1c18"/><rect x="2.600" y="6" width="3" height="4.500" fill="#e89a20"/><rect x="5.600" y="6" width="3" height="4.500" fill="#30b070"/><rect x="8.600" y="6" width="2.400" height="4.500" fill="#186858"/><path d="M3 4.900h8M3 11.600h8" stroke="#f4f4e8" stroke-width="1" stroke-dasharray="1 1.300"/></svg><div class="ctxt">registax6.jpg</div><div class="cclient"><div class="nest"><div class="pf n"><div class="pftitle"></div><div class="tshift"><svg class="ic" style="left:2px;top:4px" width="16" height="16" viewBox="0 0 16 16"><defs><linearGradient id="rg" x1="0" y1="0" x2="1" y2="1"><stop offset="0" stop-color="#e83020"/><stop offset=".35" stop-color="#e8d820"/><stop offset=".7" stop-color="#30b040"/><stop offset="1" stop-color="#2040c0"/></linearGradient></defs><rect width="16" height="16" fill="#1a1a14"/><rect x="1" y="3" width="14" height="10" fill="url(#rg)"/><path d="M1.500 1.500h13M1.500 14.500h13" stroke="#d8d8c0" stroke-width="1" stroke-dasharray="1.500 1.500"/></svg><div class="pftxt" style="left:22px">PhotoFiltre</div></div><div class="shift" style="top:-0.6px"><div class="menubar"><span style="left:5px">Fichier</span><span style="left:48px">Edition</span><span style="left:92px">Image</span><span style="left:134px">Sélection</span><span style="left:189px">Réglage</span><span style="left:240px">Filtre</span><span style="left:277px">Affichage</span><span style="left:334px">Outils</span><span style="left:373px">Fenêtre</span><span style="left:424px">?</span></div><div class="tb" style="top:46px"></div><div class="tb" style="top:77px"></div><div class="grip" style="left:2px;top:50px;height:24px"></div><svg class="ic" style="left:17px;top:52.500px" width="14.500" height="16.500" viewBox="0 0 16 18"><path d="M1.5 .5h8l4 4v12.5h-12z" fill="#fbfaf6" stroke="#7d786a"/><path d="M9.5 .5v4h4" fill="#e6e2d4" stroke="#7d786a"/><path d="M2 16.5h11.500" stroke="#5a5648" stroke-width="1.6"/><path d="M13.5 5v12" stroke="#5a5648" stroke-width="1.3"/></svg><svg class="ic" style="left:45.500px;top:52px" width="17" height="17" viewBox="0 0 18 18"><path d="M1 6.500h5l1.500 1.500h6v8.500h-12.500z" fill="#f1d27a" stroke="#7a5a12"/><path d="M3.500 10.500h13l-3 6h-12.500z" fill="#f6c64a" stroke="#7a5a12"/><path d="M9 4.500c2-3 5-3 6.500 0" fill="none" stroke="#333" stroke-width="1.300"/><path d="M14 5.500l2.500-.5-.500-2.500z" fill="#333"/></svg><svg class="ic" style="left:77px;top:54px" width="16" height="15" viewBox="0 0 18 17"><rect x="1" y="1" width="16" height="15" rx="1.500" fill="#b9b6aa" stroke="#a29f92"/><rect x="4" y="1.500" width="10" height="6" fill="#d9d6ca"/><rect x="5" y="10" width="8" height="5.500" fill="#cfccc0"/><rect x="7" y="11.500" width="3" height="3" fill="#9a978b"/></svg><div class="sep" style="left:103px;top:50px;height:24px"></div><svg class="ic" style="left:114px;top:53px" width="16" height="16" viewBox="0 0 18 18"><path d="M3 1.500h8l3 3v9h-11z" fill="#fff" stroke="#777"/><rect x="1" y="9" width="15" height="7" fill="#d8c890" stroke="#6a5a2a"/></svg><svg class="ic" style="left:144px;top:53.500px" width="16" height="15" viewBox="0 0 20 18"><path d="M2 6l8-4 8 4-8 4z" fill="#9a7ad8" stroke="#3a3a8a"/><path d="M2 9l8 4 8-4v4l-8 4-8-4z" fill="#c8c8e8" stroke="#3a3a8a"/></svg><div class="sep" style="left:171px;top:50px;height:24px"></div><svg class="ic" style="left:183.500px;top:54px" width="16" height="16" viewBox="0 0 18 18"><path d="M4 10c0-8 12-8 12 0" fill="none" stroke="#d01818" stroke-width="2.400"/><path d="M0 7l8 0-4 6z" fill="#d01818"/></svg><svg class="ic" style="left:214px;top:54px" width="16" height="16" viewBox="0 0 18 18"><path d="M2 10c0-8 12-8 12 0" fill="none" stroke="#b0ada0" stroke-width="2.400"/><path d="M18 7l-8 0 4 6z" fill="#b0ada0"/></svg><div class="sep" style="left:239.500px;top:50px;height:24px"></div><svg class="ic" style="left:249.500px;top:53.500px" width="16" height="16" viewBox="0 0 18 18"><rect x="1.500" y="1.500" width="15" height="15" fill="#c9c6ba" stroke="#9a978b"/></svg><svg class="ic" style="left:281px;top:54px" width="14.500" height="14.500" viewBox="0 0 18 18"><rect x="0" y="0" width="18" height="18" fill="#222"/><rect x="1" y="1" width="4.700" height="4.700" fill="#e02020"/><rect x="6.600" y="1" width="4.700" height="4.700" fill="#20c020"/><rect x="12.300" y="1" width="4.700" height="4.700" fill="#2040e0"/><rect x="1" y="6.600" width="4.700" height="4.700" fill="#e0e020"/><rect x="6.600" y="6.600" width="4.700" height="4.700" fill="#e020e0"/><rect x="12.300" y="6.600" width="4.700" height="4.700" fill="#20d0e0"/><rect x="1" y="12.300" width="4.700" height="4.700" fill="#ff8020"/><rect x="6.600" y="12.300" width="4.700" height="4.700" fill="#8040c0"/><rect x="12.300" y="12.300" width="4.700" height="4.700" fill="#40a080"/></svg><svg class="ic" style="left:312px;top:53.500px" width="15" height="15" viewBox="0 0 18 18"><rect x="1.500" y="1.500" width="14" height="15" fill="#f4f2ea" stroke="#555"/><circle cx="9" cy="9" r="4" fill="#444"/></svg><div class="sep" style="left:337px;top:50px;height:24px"></div><svg class="ic"  style="left:348px;top:52.500px" width="18" height="16.500" viewBox="0 0 20 18"><rect x="1.500" y="1.500" width="11" height="13" fill="#f4f2ea" stroke="#555"/><rect x="6.500" y="4.500" width="11" height="13" fill="#f4f2ea" stroke="#555"/><path d="M9 16l3-8 3 8z" fill="#333"/></svg><svg class="ic"  style="left:379px;top:52.500px" width="18" height="16.500" viewBox="0 0 20 18"><rect x="1.500" y="1.500" width="11" height="13" fill="#f4f2ea" stroke="#555"/><rect x="6.500" y="4.500" width="11" height="13" fill="#f4f2ea" stroke="#555"/><path d="M9 16l3-8 3 8z" fill="#333"/></svg><div style="position:absolute;left:408px;top:53px;width:12px;height:14px;border:1px dashed #333"></div><div style="position:absolute;left:441px;top:52.500px;width:16px;font:bold 19px/20px 'Liberation Serif',serif;color:#333">T</div><div class="sep" style="left:466px;top:50px;height:24px"></div><svg class="ic" style="left:475px;top:53px" width="18" height="16" viewBox="0 0 20 18"><rect x="1" y="2" width="8" height="5" fill="#e8d040" stroke="#665"/><rect x="9" y="7" width="8" height="5" fill="#e8d040" stroke="#665"/><path d="M4 7v3h5" fill="none" stroke="#333"/></svg><svg class="ic" style="left:506px;top:53.500px" width="18" height="16" viewBox="0 0 20 18"><path d="M2 12l4-8 4 4 3-3 4 7z" fill="#d8a838" stroke="#864"/></svg><svg class="ic" style="left:535.500px;top:53px" width="17" height="17" viewBox="0 0 18 18"><rect x="1.500" y="2.500" width="15" height="12" fill="#e8eef8" stroke="#446"/><rect x="2" y="3" width="14" height="3" fill="#3a5aa8"/></svg><div class="grip" style="left:563px;top:50px;height:24px"></div><div style="position:absolute;left:572px;top:51.500px;width:72.500px;height:21px;border:1px solid #7f9db9;background:#fff"><span style="position:absolute;left:4px;top:4.500px;font-size:11.500px">97%</span><div style="position:absolute;right:1px;top:1px;width:15px;height:19px;background:#c1d2f8;border-radius:2px"><svg width="15" height="19" viewBox="0 0 15 19"><path d="M4 8l3.500 3.500L11 8" fill="none" stroke="#4d6185" stroke-width="2"/></svg></div></div><svg class="ic" style="left:655px;top:53px" width="14" height="16" viewBox="0 0 16 18"><circle cx="8" cy="7.500" r="6" fill="#f8f8f4" stroke="#222" stroke-width="1.300"/><path d="M4.500 7.500h7M8 4v7" stroke="#222" stroke-width="1.400"/></svg><svg class="ic" style="left:684.500px;top:53px" width="14" height="16" viewBox="0 0 16 18"><circle cx="8" cy="7.500" r="6" fill="#f8f8f4" stroke="#222" stroke-width="1.300"/><path d="M4.500 7.500h7" stroke="#222" stroke-width="1.400"/></svg><svg class="ic" style="left:716px;top:53px" width="20" height="16" viewBox="0 0 20 16"><path d="M1 1h18" stroke="#334"/><path d="M3 1v3M17 1v3" stroke="#334"/><rect x="3.500" y="4.500" width="13" height="11" fill="#cfe0c8" stroke="#355"/><path d="M4 15l3-6 3 4 2-3 4 5z" fill="#3a8a4a"/></svg><svg class="ic" style="left:746px;top:53px" width="20" height="16" viewBox="0 0 20 16"><path d="M1 1h18" stroke="#334"/><path d="M3 1v3M17 1v3" stroke="#334"/><rect x="3.500" y="4.500" width="13" height="11" fill="#cfe0c8" stroke="#355"/><path d="M4 15l3-6 3 4 2-3 4 5z" fill="#3a8a4a"/></svg><svg class="ic" style="left:776px;top:53px" width="20" height="16" viewBox="0 0 20 16"><rect x="1" y="1" width="18" height="3" fill="#334"/><rect x="3.500" y="4.500" width="13" height="11" fill="#b8d8e8" stroke="#244"/></svg><div class="grip" style="left:2px;top:81px;height:24px"></div><div style="position:absolute;left:15px;top:80px;width:20px;height:24px"><span style="position:absolute;left:1px;top:1.500px;font:bold 14px/15px 'Liberation Serif',serif;color:#111">Γ</span><span style="position:absolute;left:11px;top:2.500px;font:11px/12px 'Liberation Sans',sans-serif;color:#222">±</span><span class="auto">AUTO</span></div><div style="position:absolute;left:45px;top:80px;width:20px;height:24px"><svg style="position:absolute;left:.5px;top:5.500px" width="8.500" height="8.500" viewBox="0 0 10 10"><circle cx="5" cy="5" r="4.300" fill="#fff" stroke="#111" stroke-width=".8"/><path d="M5 .5a4.500 4.500 0 0 0 0 9z" fill="#111"/></svg><span style="position:absolute;left:11px;top:2.500px;font:11px/12px 'Liberation Sans',sans-serif;color:#222">±</span><span class="auto">AUTO</span></div><div class="sep" style="left:73px;top:81px;height:24px"></div><svg class="ic" style="left:83.500px;top:83.500px" width="18" height="16" viewBox="0 0 18 16"><circle cx="6.500" cy="6.500" r="2.300" fill="#fff" stroke="#111" stroke-width="1.100"/><path d="M6.500 .8v2.200M6.500 10v2.200M.8 6.500h2.200M10 6.500h2.200M2.400 2.400l1.600 1.600M9 9l1.600 1.600M10.600 2.400L9 4M4 9l-1.600 1.600" stroke="#111" stroke-width="1.100"/><path d="M11 14h5.500" stroke="#111" stroke-width="2"/></svg><div class="mdi"><div class="child"><div class="ctitle"></div><svg class="ic" style="left:7px;top:7px" width="13.500" height="14.500" viewBox="0 0 14 15"><path d="M.5 .5h9l3.500 3.500v10.500h-12.500z" fill="#fdfdfd" stroke="#7c86b8"/><path d="M13.200 4.500v10M1 14.300h12.500" stroke="#1c3a9a" stroke-width="1.200"/><rect x="1.800" y="4" width="10" height="8.500" fill="#1c1c18"/><rect x="2.600" y="6" width="3" height="4.500" fill="#e89a20"/><rect x="5.600" y="6" width="3" height="4.500" fill="#30b070"/><rect x="8.600" y="6" width="2.400" height="4.500" fill="#186858"/><path d="M3 4.900h8M3 11.600h8" stroke="#f4f4e8" stroke-width="1" stroke-dasharray="1 1.300"/></svg><div class="ctxt">registax5.jpg</div><div class="cclient"><div class="nest"><div class="pf" style="background:#fff"><div class="pftitle"></div><svg class="ic" style="left:4px;top:4px" width="18" height="18" viewBox="0 0 18 18"><circle cx="9.500" cy="10" r="6.500" fill="#2f8fe6" stroke="#1a62c0"/><circle cx="8" cy="8" r="2.500" fill="#8fd0ff" opacity=".7"/><path d="M6 10.500h7" stroke="#e8f4ff" stroke-width="1.200"/><path d="M1.500 15.500c1-8 8-13 14-13" fill="none" stroke="#d8c040" stroke-width="1.800"/></svg><div class="pftxt" style="left:23px">[Planète</div><div style="position:absolute;left:13px;top:29px;width:17px;height:17px;border-radius:50%;background:#5a5a5a"></div><div style="position:absolute;left:45px;top:29px;width:17px;height:17px;border-radius:50%;background:#5a5a5a"></div></div></div></div></div></div></div></div></div></div></div></div></div></div></div></div></div></div></div></div></div></div></div></div></div></div><div id="rx">
<div class="rxframe"></div><div class="rxtitle"></div>
<div class="rxicon"><span style="top:0;left:1px;color:#7ee84a">Regi</span><span style="top:7px;left:2px;color:#38d8e8;font-style:italic">Stax</span><i></i></div>
<div class="rxttxt">Registax processing AVI: vid19.avi</div>
<div class="rxclient">
<div class="toppanel"></div>
<div class="l " style="left:221px;top:90px;">Files</div>
<div class="l " style="left:461px;top:90px;">Project files</div>
<div class="b tb" style="left:121px;top:101.5px;width:69px;height:19px;"><span>Select</span></div>
<div class="b tb" style="left:192px;top:101.5px;width:68px;height:19px;"><span>Flat/Dark <svg width="8" height="5" viewBox="0 0 8 5" style="margin-left:1px;vertical-align:1px"><path d="M0 0h8l-4 4.500z" fill="#000"/></svg></span></div>
<div class="b tb" style="left:261px;top:101.5px;width:70px;height:19px;"><span>ImageInfo</span></div>
<div class="b tb" style="left:401px;top:101.5px;width:70px;height:19px;"><span>Save</span></div>
<div class="b tb" style="left:471.5px;top:101.5px;width:70px;height:19px;"><span>Load</span></div>
<div class="b tb" style="left:542px;top:101.5px;width:69px;height:19px;"><span>Save as</span></div>
<div class="l f12" style="left:616px;top:90px;">File Version: 4.0.1.1</div>
<div class="l f12" style="left:752px;top:90px;">19-11-20</div>
<div class="l f12" style="left:616px;top:105px;">Memory used :73MB</div>
<div class="tab " style="left:122px;width:64px"><span>Align</span></div>
<div class="tab " style="left:192px;width:64px"><span>Optimize</span></div>
<div class="tab " style="left:263px;width:63px"><span>Stack</span></div>
<div class="tab act" style="left:332px;width:67px"><span>Wavelet</span></div>
<div class="tab " style="left:404px;width:63px"><span>Final</span></div>
<div class="tab " style="left:472px;width:65px"><span>About</span></div>
<div class="tabline"></div><div style="position:absolute;left:539px;top:139px;width:270px;height:1.500px;background:#6a6960"></div>
<div class="b ab" style="left:121px;top:164px;width:65px;height:34px;padding-bottom:3px"><span>Process</span></div>
<div class="b ab" style="left:186px;top:164px;width:64px;height:34px;padding-bottom:3px"><span>Do All</span></div>
<div style="position:absolute;left:186px;top:195.500px;width:64px;height:4px;background:#36d436;border-top:1px solid #1f5f1f;border-bottom:.5px solid #2a8a2a"></div>
<div class="b ab" style="left:250px;top:164px;width:64px;height:34px;padding-bottom:2px"><span>Realign with<br>Processed</span></div>
<div class="b ab" style="left:121px;top:200px;width:65px;height:36px;color:#e01010;font-weight:bold"><span>Save<br>Image</span></div>
<div class="b ab" style="left:186px;top:200px;width:64px;height:36px;"><span>Reset</span></div>
<div class="vdiv" style="left:328px"></div>
<div class="vdiv" style="left:470px"></div>
<div class="vdiv" style="left:609px"></div>
<div class="vdiv" style="left:785px"></div>
<div class="hdiv"></div>
<div class="l hd" style="left:332px;top:156px;">Processing</div>
<div class="l hd" style="left:476px;top:156px;">Image</div>
<div class="l hd" style="left:612px;top:156px;">Markings</div>
<div class="l hd" style="left:789px;top:156px;">Fu</div>
<div class="cb" style="left:336.5px;top:179.5px"></div>
<div class="l " style="left:355px;top:180.3px;letter-spacing:-.2px">Automatic</div>
<div class="cb" style="left:336.5px;top:201.5px"></div>
<div class="l " style="left:355px;top:202.3px;letter-spacing:-.18px">Hold Wavelet Setting</div>
<div class="cb" style="left:480px;top:179.5px"></div>
<div class="l " style="left:499px;top:180.3px;">View Full Image</div>
<div class="cb" style="left:480px;top:201.5px"></div>
<div class="l " style="left:499px;top:202.3px;">Show Zoomed</div>
<div class="cb" style="left:616px;top:179.5px"></div>
<div class="l " style="left:634.5px;top:180.3px;letter-spacing:.1px">Show Processing Area</div>
<div class="cb" style="left:616px;top:201.5px"></div>
<div class="l " style="left:634.5px;top:202.3px;">Show Alignment Points</div>
<div class="st0" style="left:331.500px;top:225.500px;width:102px;height:22px"><span>Wavelet options</span></div>
<div class="st" style="left:436.5px;width:117px"><span>Contrast/Brightness</span></div>
<div class="st" style="left:557px;width:74px"><span>RGB Align</span></div>
<div class="st" style="left:635px;width:112px"><span>Additional options</span></div>
<div class="blk"></div>
<svg class="ic" style="left:530px;top:265px" width="240" height="230" viewBox="530 265 240 230">
<defs>
<filter id="jb" x="-10%" y="-10%" width="120%" height="120%" color-interpolation-filters="sRGB"><feGaussianBlur stdDeviation="3.4"/></filter>
<filter id="je" x="-10%" y="-10%" width="120%" height="120%" color-interpolation-filters="sRGB"><feGaussianBlur stdDeviation="1.1"/></filter>
<clipPath id="jc"><ellipse cx="651" cy="381.500" rx="101.500" ry="96"/></clipPath>
<radialGradient id="jl" cx="651" cy="381.500" r="101.500" gradientUnits="userSpaceOnUse" gradientTransform="translate(0 20.700) scale(1 .9458)">
<stop offset="0" stop-color="#000" stop-opacity="0"/><stop offset=".8" stop-color="#000" stop-opacity="0"/><stop offset=".92" stop-color="#04080c" stop-opacity=".22"/><stop offset="1" stop-color="#000" stop-opacity=".6"/>
</radialGradient>
<linearGradient id="jg1" x1="560" y1="0" x2="640" y2="0" gradientUnits="userSpaceOnUse"><stop offset="0" stop-color="#758172"/><stop offset="1" stop-color="#757558"/></linearGradient>
<linearGradient id="jg2" x1="590" y1="0" x2="650" y2="0" gradientUnits="userSpaceOnUse"><stop offset="0" stop-color="#746c4e" stop-opacity="0"/><stop offset="1" stop-color="#746a4c"/></linearGradient>
<linearGradient id="jg3" x1="570" y1="0" x2="630" y2="0" gradientUnits="userSpaceOnUse"><stop offset="0" stop-color="#888c76" stop-opacity="0"/><stop offset="1" stop-color="#888a74"/></linearGradient>
<linearGradient id="jg4" x1="562" y1="0" x2="625" y2="0" gradientUnits="userSpaceOnUse"><stop offset="0" stop-color="#80765a" stop-opacity="0"/><stop offset="1" stop-color="#807556"/></linearGradient>
<linearGradient id="jg5" x1="575" y1="0" x2="660" y2="0" gradientUnits="userSpaceOnUse"><stop offset="0" stop-color="#869480" stop-opacity="0"/><stop offset="1" stop-color="#869480"/></linearGradient>
<linearGradient id="jx" x1="549" y1="0" x2="640" y2="0" gradientUnits="userSpaceOnUse"><stop offset="0" stop-color="#101820" stop-opacity=".42"/><stop offset=".1" stop-color="#182024" stop-opacity=".2"/><stop offset=".45" stop-color="#1c2422" stop-opacity=".08"/><stop offset="1" stop-color="#202820" stop-opacity="0"/></linearGradient>
</defs>
<g filter="url(#je)"><g clip-path="url(#jc)">
<rect x="530" y="265" width="240" height="230" fill="#818e7a"/>
<g transform="rotate(12 651 382)" filter="url(#jb)">
<rect x="520" y="270" width="270" height="30" fill="#5f6450"/>
<rect x="520" y="298" width="270" height="28" fill="url(#jg1)"/>
<rect x="636" y="306" width="40" height="4" fill="#646047"/>
<rect x="560" y="321" width="230" height="8" fill="url(#jg2)"/>
<rect x="560" y="331" width="230" height="13" fill="url(#jg3)"/>
<rect x="560" y="345" width="230" height="19" fill="url(#jg4)"/>
<rect x="520" y="365" width="270" height="60" fill="#818e7a"/>
<rect x="570" y="370" width="220" height="30" fill="url(#jg5)"/>
<rect x="520" y="424" width="270" height="20" fill="#797f63"/>
<rect x="520" y="443" width="270" height="18" fill="#6e7254"/>
<rect x="520" y="460" width="270" height="40" fill="#595734"/>
</g>
<rect x="540" y="270" width="110" height="220" fill="url(#jx)"/>
<ellipse cx="651" cy="381.500" rx="103" ry="97.500" fill="url(#jl)"/>
</g></g>
</svg>
<div class="gb" style="left:122px;top:250px;width:168px;height:26px"></div><div class="l gbl" style="left:130px;top:245px;">Wavelet filter</div>
<div class="gb" style="left:122px;top:279.500px;width:168px;height:22px"></div><div class="l gbl" style="left:130px;top:274px;">Wavelet scheme</div>
<div class="rd" style="left:130.5px;top:258.5px"><i></i></div>
<div class="l " style="left:147px;top:260px;">Default</div>
<div class="rd" style="left:211px;top:258.5px"></div>
<div class="l " style="left:226px;top:260px;">Gaussian</div>
<div class="rd" style="left:130.5px;top:287.5px"></div>
<div class="l " style="left:147px;top:287px;">Dyadic (2^n)</div>
<div class="rd" style="left:211px;top:287.5px"><i></i></div>
<div class="l " style="left:226px;top:287px;">Linear</div>
<div class="l il" style="left:123px;top:304px;">Initial<br>Layer</div>
<div class="l il" style="left:200px;top:304px;">Step<br><span style="letter-spacing:-.25px">Increment</span></div>
<div class="sv" style="left:155px;top:307.5px;width:20px"><span>1</span></div><div class="sb" style="left:176.2px;top:307.5px"><svg width="20" height="22" viewBox="0 0 20 22"><path d="M1 21L19 1" stroke="#000" stroke-width="1.200"/><path d="M5.500 10.500V5" stroke="#000" stroke-width="1.800"/><path d="M2.300 6.800L5.500 2.800L8.700 6.800z" fill="#000"/><path d="M14.500 11v6" stroke="#000" stroke-width="1.800"/><path d="M11.300 15l3.200 4 3.200-4z" fill="#000"/></svg></div>
<div class="sv" style="left:250px;top:307.5px;width:17.5px"><span>0</span></div><div class="sb" style="left:268.7px;top:307.5px"><svg width="20" height="22" viewBox="0 0 20 22"><path d="M1 21L19 1" stroke="#000" stroke-width="1.200"/><path d="M5.500 10.500V5" stroke="#000" stroke-width="1.800"/><path d="M2.300 6.800L5.500 2.800L8.700 6.800z" fill="#000"/><path d="M14.500 11v6" stroke="#000" stroke-width="1.800"/><path d="M11.300 15l3.200 4 3.200-4z" fill="#000"/></svg></div>
<div class="l " style="left:122px;top:338px;">Layer</div>
<div class="l " style="left:242.5px;top:338px;">Preview</div>
<div class="cb" style="left:124px;top:357.3px"><svg width="9" height="9" viewBox="0 0 9 9" style="position:absolute;left:1.500px;top:1.500px"><path d="M1 3.500l2.500 2.500L8 1.500" fill="none" stroke="#000" stroke-width="2.300"/></svg></div>
<div class="l " style="left:141px;top:357.3px;">1 : 1</div>
<div class="pv" style="left:241.500px;top:353px"><span>7,9</span></div>
<div class="sl" style="left:122.500px;top:383.8px"></div>
<div class="th" style="left:142.5px;top:378px"><svg width="6.500" height="15" viewBox="0 0 7 15"><path d="M.5 .5h6v10l-3 4-3-4z" fill="#c4c4c4" stroke="#686868"/><path d="M1.500 1.500v8.500" stroke="#f4f4f4"/></svg></div>
<div class="cb" style="left:124px;top:401.3px"><svg width="9" height="9" viewBox="0 0 9 9" style="position:absolute;left:1.500px;top:1.500px"><path d="M1 3.500l2.500 2.500L8 1.500" fill="none" stroke="#000" stroke-width="2.300"/></svg></div>
<div class="l " style="left:141px;top:401.3px;">2 : 1</div>
<div class="pv" style="left:241.500px;top:397px"><span>5,8</span></div>
<div class="sl" style="left:122.500px;top:427.8px"></div>
<div class="th" style="left:140px;top:422px"><svg width="6.500" height="15" viewBox="0 0 7 15"><path d="M.5 .5h6v10l-3 4-3-4z" fill="#c4c4c4" stroke="#686868"/><path d="M1.500 1.500v8.500" stroke="#f4f4f4"/></svg></div>
<div class="cb" style="left:124px;top:445.3px"><svg width="9" height="9" viewBox="0 0 9 9" style="position:absolute;left:1.500px;top:1.500px"><path d="M1 3.500l2.500 2.500L8 1.500" fill="none" stroke="#000" stroke-width="2.300"/></svg></div>
<div class="l " style="left:141px;top:445.3px;">3 : 1</div>
<div class="pv" style="left:241.500px;top:441px"><span>3,1</span></div>
<div class="sl" style="left:122.500px;top:471.8px"></div>
<div class="th" style="left:136px;top:466px"><svg width="6.500" height="15" viewBox="0 0 7 15"><path d="M.5 .5h6v10l-3 4-3-4z" fill="#c4c4c4" stroke="#686868"/><path d="M1.500 1.500v8.500" stroke="#f4f4f4"/></svg></div>
<div class="cb" style="left:124px;top:489.3px"><svg width="9" height="9" viewBox="0 0 9 9" style="position:absolute;left:1.500px;top:1.500px"><path d="M1 3.500l2.500 2.500L8 1.500" fill="none" stroke="#000" stroke-width="2.300"/></svg></div>
<div class="l " style="left:141px;top:489.3px;">4 : 1</div>
<div class="pv" style="left:241.500px;top:485px"><span>7,8</span></div>
<div class="focus" style="left:121px;top:507px;width:168.500px;height:20px"></div>
<div class="sl" style="left:122.500px;top:515.8px"></div>
<div class="th" style="left:143px;top:510px"><svg width="6.500" height="15" viewBox="0 0 7 15"><path d="M.5 .5h6v10l-3 4-3-4z" fill="#c4c4c4" stroke="#686868"/><path d="M1.500 1.500v8.500" stroke="#f4f4f4"/></svg></div>
<div class="cb" style="left:124px;top:533.3px"><svg width="9" height="9" viewBox="0 0 9 9" style="position:absolute;left:1.500px;top:1.500px"><path d="M1 3.500l2.500 2.500L8 1.500" fill="none" stroke="#000" stroke-width="2.300"/></svg></div>
<div class="l " style="left:141px;top:533.3px;">5 : 1</div>
<div class="pv" style="left:241.500px;top:529px"><span>37,4</span></div>
<div class="sl" style="left:122.500px;top:559.8px"></div>
<div class="th" style="left:187px;top:554px"><svg width="6.500" height="15" viewBox="0 0 7 15"><path d="M.5 .5h6v10l-3 4-3-4z" fill="#c4c4c4" stroke="#686868"/><path d="M1.500 1.500v8.500" stroke="#f4f4f4"/></svg></div>
<div class="cb" style="left:124px;top:577.3px"><svg width="9" height="9" viewBox="0 0 9 9" style="position:absolute;left:1.500px;top:1.500px"><path d="M1 3.500l2.500 2.500L8 1.500" fill="none" stroke="#000" stroke-width="2.300"/></svg></div>
<div class="l " style="left:141px;top:577.3px;">6 : 1</div>
<div class="pv" style="left:241.500px;top:573px"><span>81,2</span></div>
<div class="sl" style="left:122.500px;top:603.8px"></div>
<div class="th" style="left:255px;top:598px"><svg width="6.500" height="15" viewBox="0 0 7 15"><path d="M.5 .5h6v10l-3 4-3-4z" fill="#c4c4c4" stroke="#686868"/><path d="M1.500 1.500v8.500" stroke="#f4f4f4"/></svg></div>
</div>
</div>

</div>
</body></html>
